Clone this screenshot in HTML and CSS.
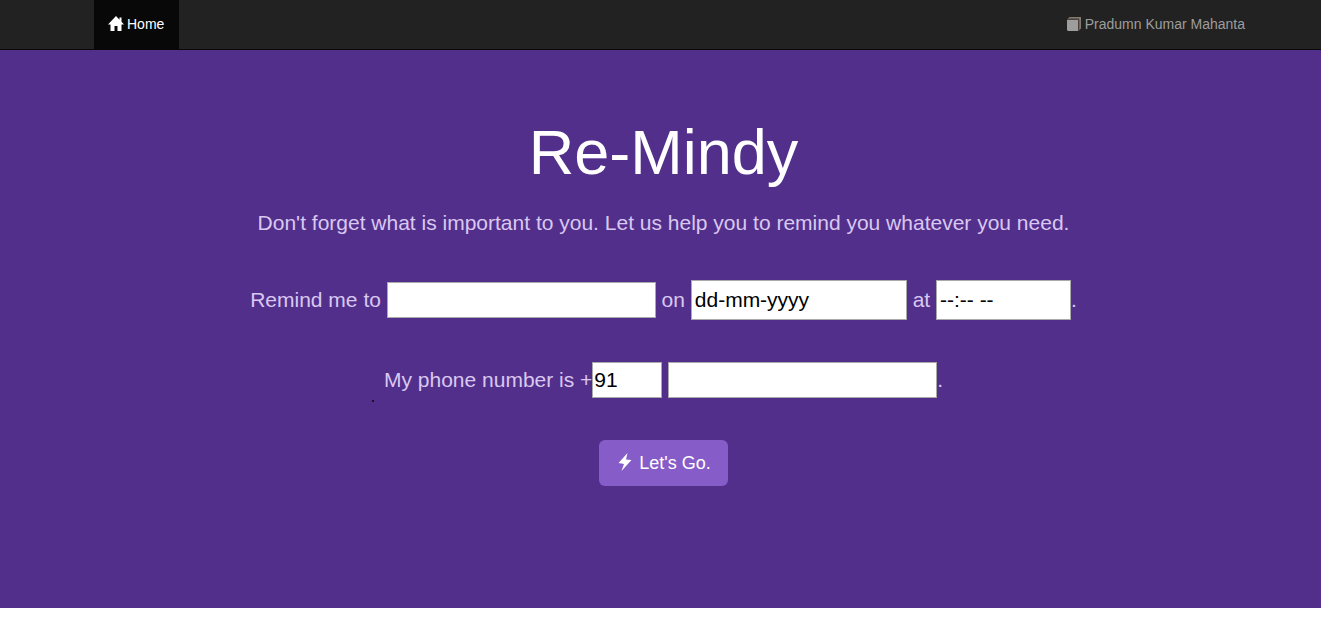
FILE: index.html
```html
<!DOCTYPE html>
<html lang="en">
<head>
<meta charset="utf-8">
<meta name="viewport" content="width=device-width, initial-scale=1">
<title>Re-Mindy</title>
<link rel="stylesheet" href="styles.css">
</head>
<body>
<nav class="navbar">
  <a class="nav-link active" href="#">
    <svg class="icon-home" viewBox="0 0 16 16" aria-hidden="true"><path d="M8 0L0 8.5H2.5V15H6.5V10H9.5V15H13.5V8.5H16L13.5 5.8V1.5H11.5V3.7Z"/></svg>
    <span>Home</span>
  </a>
  <a class="nav-link" href="#">
    <svg class="icon-book" viewBox="0 0 14 14" aria-hidden="true"><path d="M0 3H11V14H1L0 13Z"/><path d="M0 2.5L2.5 0H14V11.5L11.5 14V2.5Z" fill="#85796f"/><path d="M1.5 2H11.8V13.5" fill="none" stroke="#443c36"/></svg>
    <span>Pradumn Kumar Mahanta</span>
  </a>
</nav>
<main class="hero">
  <h1 class="title">Re-Mindy</h1>
  <p class="lead">Don't forget what is important to you. Let us help you to remind you whatever you need.</p>
  <form class="form">
    <p class="line"><label for="task">Remind me to</label> <input class="field" id="task" type="text"> <label for="date">on</label> <input class="field field-date" id="date" type="text" placeholder="dd-mm-yyyy"> <label for="time">at</label> <input class="field field-time" id="time" type="text" placeholder="--:-- --">.</p>
    <p class="line line-phone"><label for="code">My phone number is +</label><input class="field field-code" id="code" type="text" value="91"> <input class="field" type="tel" aria-label="Phone number">.<span class="speck"></span></p>
    <button class="submit" type="button">
      <svg class="icon-flash" viewBox="0 0 14 20" aria-hidden="true"><path d="M9.5 0L0.5 10L6 11L3.5 18L13.5 7L8 6.5Z"/></svg>
      <span>Let's Go.</span>
    </button>
  </form>
</main>
</body>
</html>
```
FILE: styles.css
```css
* {
  box-sizing: border-box;
}

body {
  margin: 0;
  background: #fff;
  font-family: Arial, "Liberation Sans", sans-serif;
  font-size: 14px;
  line-height: 20px;
}

.navbar {
  display: flex;
  justify-content: space-between;
  min-height: 50px;
  padding: 0 61px 0 94px;
  background: #222;
  border-bottom: 1px solid #080808;
}

.nav-link {
  display: flex;
  align-items: center;
  gap: 4px;
  padding: 13px 15px 15px;
  color: #9d9d9d;
  text-decoration: none;
}

.nav-link.active {
  gap: 3px;
  padding-left: 14px;
  background: #080808;
  color: #fff;
}

.icon-home,
.icon-book,
.icon-flash {
  flex: none;
  fill: currentColor;
}

.icon-home {
  width: 16px;
  height: 16px;
}

.icon-book {
  width: 14px;
  height: 14px;
}

.hero {
  padding: 68px 10px 122px 16px;
  background: #532f8c;
  color: #d9c8f0;
  text-align: center;
  font-size: 21px;
  line-height: 30px;
}

.title {
  margin: 0 0 21px;
  color: #fff;
  font-size: 63px;
  font-weight: 400;
  line-height: 69px;
}

.lead {
  margin: 0 0 42px;
}

.line {
  margin: 0 0 42px;
}

.line-phone {
  position: relative;
}

.field {
  width: 269px;
  height: 36px;
  padding: 1px;
  border: 1px solid #a9a9a9;
  border-radius: 0;
  background: #fff;
  color: #000;
  font: inherit;
  vertical-align: baseline;
}

.field::placeholder {
  color: #000;
  opacity: 1;
}

.field-date,
.field-time {
  height: 40px;
  padding: 1px 3px;
}

.field-date {
  width: 216px;
}

.field-time {
  width: 135px;
}

.field-code {
  width: 70px;
}

.speck {
  position: absolute;
  top: 38px;
  left: calc(50% - 292px);
  width: 2px;
  height: 2px;
  background: #1c1030;
}

.submit {
  display: inline-flex;
  align-items: center;
  gap: 7px;
  padding: 10px 17px 10px 19px;
  border: 0;
  border-radius: 6px;
  background: #865cc8;
  color: #fff;
  font: inherit;
  font-size: 18px;
  line-height: 26px;
}

.icon-flash {
  width: 14px;
  height: 20px;
}
```
